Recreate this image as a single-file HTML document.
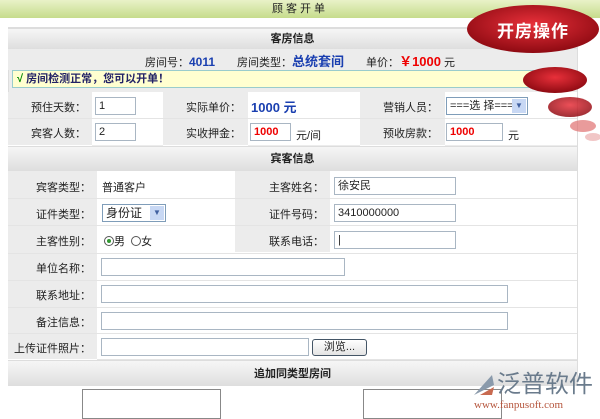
<!DOCTYPE html>
<html><head><meta charset="utf-8"><style>
*{margin:0;padding:0;box-sizing:border-box}
body{width:600px;height:416px;overflow:hidden;background:#fff;font-family:"Liberation Sans","Noto Sans CJK SC",sans-serif;font-size:11px;color:#222;position:relative}
.top{position:absolute;left:0;top:0;width:600px;height:18px;background:linear-gradient(#e9f2c8,#c6dc8c);text-align:center;font-size:11px;line-height:18px;letter-spacing:3px}
.abs{position:absolute;white-space:nowrap}
.hdr{position:absolute;left:8px;width:569px;background:linear-gradient(#f6f6f6,#dedede);text-align:center;font-weight:bold;font-size:11px;border-top:1px solid #ddd}
.g{position:absolute;background:#ececec;border-bottom:1px solid #fff}
.w{position:absolute;background:#fff;border-bottom:1px solid #e4e4e4}
.lb{position:absolute;text-align:right;font-size:11px;white-space:nowrap}
.in{position:absolute;border:1px solid #a9b6c3;background:#fff;height:18px;font-size:11px;line-height:16px;padding-left:3px;white-space:nowrap}
.red{color:#e00;font-weight:bold}
</style></head><body>
<div class="top">顾客开单</div>
<div class="abs" style="left:8px;top:27px;width:570px;height:360px;background:#ececec;border:1px solid #ddd"></div>
<div class="hdr" style="top:28px;height:21px;line-height:21px">客房信息</div>
<div class="abs" style="left:8px;top:49px;width:569px;height:21px;background:#ececec"></div>
<div class="abs" style="left:145px;top:54px;font-size:11px;line-height:16px">房间号：<b style="color:#1a3fb0;font-size:12px">4011</b>　　房间类型：<b style="color:#1a3fb0;font-size:13px">总统套间</b>　　单价：<b style="color:#e00;font-size:13px">￥1000</b> 元</div>
<div class="abs" style="left:12px;top:70px;width:561px;height:18px;background:#ffffd0;border:1px solid #9cc;font-weight:bold;color:#226;line-height:16px;padding-left:4px;font-size:11px"><span style="color:#080">√</span> 房间检测正常，您可以开单！</div>
<div class="w" style="left:8px;top:92px;width:569px;height:53px;border:none"></div>
<div class="g" style="left:8px;top:92px;width:84px;height:54px"></div>
<div class="g" style="left:163px;top:92px;width:85px;height:54px"></div>
<div class="g" style="left:360px;top:92px;width:85px;height:54px"></div>
<div class="abs" style="left:8px;top:118px;width:569px;height:1px;background:#e4e4e4"></div>
<div class="lb" style="left:8px;top:99px;width:78px">预住天数：</div>
<div class="lb" style="left:8px;top:125px;width:78px">宾客人数：</div>
<div class="lb" style="left:163px;top:99px;width:78px">实际单价：</div>
<div class="lb" style="left:163px;top:125px;width:78px">实收押金：</div>
<div class="lb" style="left:360px;top:99px;width:78px">营销人员：</div>
<div class="lb" style="left:360px;top:125px;width:78px">预收房款：</div>
<div class="in" style="left:95px;top:97px;width:41px">1</div>
<div class="in" style="left:95px;top:123px;width:41px">2</div>
<div class="abs" style="left:251px;top:97px;color:#1a3fb0;font-weight:bold;font-size:13px">1000 元</div>
<div class="in red" style="left:250px;top:123px;width:41px">1000</div>
<div class="abs" style="left:296px;top:127px">元/间</div>
<div class="in" style="left:446px;top:97px;width:82px;border-color:#7f9db9">===选 择===<span style="position:absolute;right:1px;top:1px;width:14px;height:14px;background:#c8d8f4;color:#4060a0;font-size:8px;text-align:center;line-height:14px">▼</span></div>
<div class="in red" style="left:446px;top:123px;width:57px">1000</div>
<div class="abs" style="left:508px;top:127px">元</div>
<div class="hdr" style="top:146px;height:25px;line-height:25px">宾客信息</div>
<div class="w" style="left:8px;top:171px;width:569px;height:189px"></div>
<div class="g" style="left:8px;top:171px;width:89px;height:189px"></div>
<div class="g" style="left:235px;top:171px;width:95px;height:82px"></div>
<div class="abs" style="left:8px;top:198px;width:569px;height:1px;background:#e4e4e4"></div>
<div class="abs" style="left:8px;top:225px;width:569px;height:1px;background:#e4e4e4"></div>
<div class="abs" style="left:8px;top:253px;width:569px;height:1px;background:#e4e4e4"></div>
<div class="abs" style="left:8px;top:280px;width:569px;height:1px;background:#e4e4e4"></div>
<div class="abs" style="left:8px;top:307px;width:569px;height:1px;background:#e4e4e4"></div>
<div class="abs" style="left:8px;top:333px;width:569px;height:1px;background:#e4e4e4"></div>
<div class="lb" style="left:8px;top:179px;width:83px">宾客类型：</div>
<div class="lb" style="left:8px;top:206px;width:83px">证件类型：</div>
<div class="lb" style="left:8px;top:233px;width:83px">主客性别：</div>
<div class="lb" style="left:8px;top:260px;width:83px">单位名称：</div>
<div class="lb" style="left:8px;top:287px;width:83px">联系地址：</div>
<div class="lb" style="left:8px;top:314px;width:83px">备注信息：</div>
<div class="lb" style="left:8px;top:340px;width:83px">上传证件照片：</div>
<div class="abs" style="left:102px;top:179px">普通客户</div>
<div class="in" style="left:102px;top:204px;width:64px;border-color:#7f9db9;font-size:12px">身份证<span style="position:absolute;right:1px;top:1px;width:14px;height:14px;background:#c8d8f4;color:#4060a0;font-size:8px;text-align:center;line-height:14px">▼</span></div>
<div class="abs" style="left:104px;top:233px"><span style="display:inline-block;width:10px;height:10px;border:1px solid #555;border-radius:50%;vertical-align:-1px;position:relative"><span style="position:absolute;left:2px;top:2px;width:4px;height:4px;background:#393;border-radius:50%"></span></span>男 <span style="display:inline-block;width:10px;height:10px;border:1px solid #555;border-radius:50%;vertical-align:-1px;margin-left:3px"></span>女</div>
<div class="lb" style="left:235px;top:179px;width:89px">主客姓名：</div>
<div class="lb" style="left:235px;top:206px;width:89px">证件号码：</div>
<div class="lb" style="left:235px;top:233px;width:89px">联系电话：</div>
<div class="in" style="left:334px;top:177px;width:122px">徐安民</div>
<div class="in" style="left:334px;top:204px;width:122px">3410000000</div>
<div class="in" style="left:334px;top:231px;width:122px">|</div>
<div class="in" style="left:101px;top:258px;width:244px"></div>
<div class="in" style="left:101px;top:285px;width:407px"></div>
<div class="in" style="left:101px;top:312px;width:407px"></div>
<div class="in" style="left:101px;top:338px;width:208px"></div>
<div class="abs" style="left:312px;top:339px;width:55px;height:17px;border:1px solid #456;border-radius:3px;background:linear-gradient(#fff,#e3e3e3);text-align:center;line-height:15px">浏览...</div>
<div class="hdr" style="top:360px;height:26px;line-height:26px">追加同类型房间</div>
<div class="abs" style="left:8px;top:386px;width:570px;height:30px;background:#fff"></div>
<div class="abs" style="left:82px;top:389px;width:139px;height:30px;border:1px solid #888"></div>
<div class="abs" style="left:363px;top:389px;width:139px;height:30px;border:1px solid #888"></div>
<svg class="abs" style="left:460px;top:0" width="140" height="150">
<defs><radialGradient id="r" cx="50%" cy="40%" r="60%"><stop offset="0" stop-color="#e8303a"/><stop offset="1" stop-color="#8e0a12"/></radialGradient></defs>
<ellipse cx="73" cy="29" rx="66" ry="24" fill="url(#r)"/>
<ellipse cx="95" cy="80" rx="32" ry="13" fill="url(#r)"/>
<ellipse cx="110" cy="107" rx="22" ry="10" fill="url(#r)" opacity=".85"/>
<ellipse cx="123" cy="126" rx="13" ry="6" fill="#e07070" opacity=".7"/>
<ellipse cx="133" cy="137" rx="8" ry="4" fill="#e8a0a0" opacity=".6"/>
</svg>
<div class="abs" style="left:497px;top:17px;color:#fff;font-weight:bold;font-size:17px;letter-spacing:1px">开房操作</div>
<svg class="abs" style="left:472px;top:373px" width="24" height="24"><path d="M2 22 L20 2 L22 12 Z" fill="#8a9aab"/><path d="M8 22 L22 14 L20 22 Z" fill="#c86a50"/></svg>
<div class="abs" style="left:497px;top:370px;color:#6a7b8c;font-size:24px;line-height:30px">泛普软件</div>
<div class="abs" style="left:474px;top:399px;color:#b5553c;font-family:'Liberation Serif',serif;font-size:11px">www.fanpusoft.com</div>
</body></html>
